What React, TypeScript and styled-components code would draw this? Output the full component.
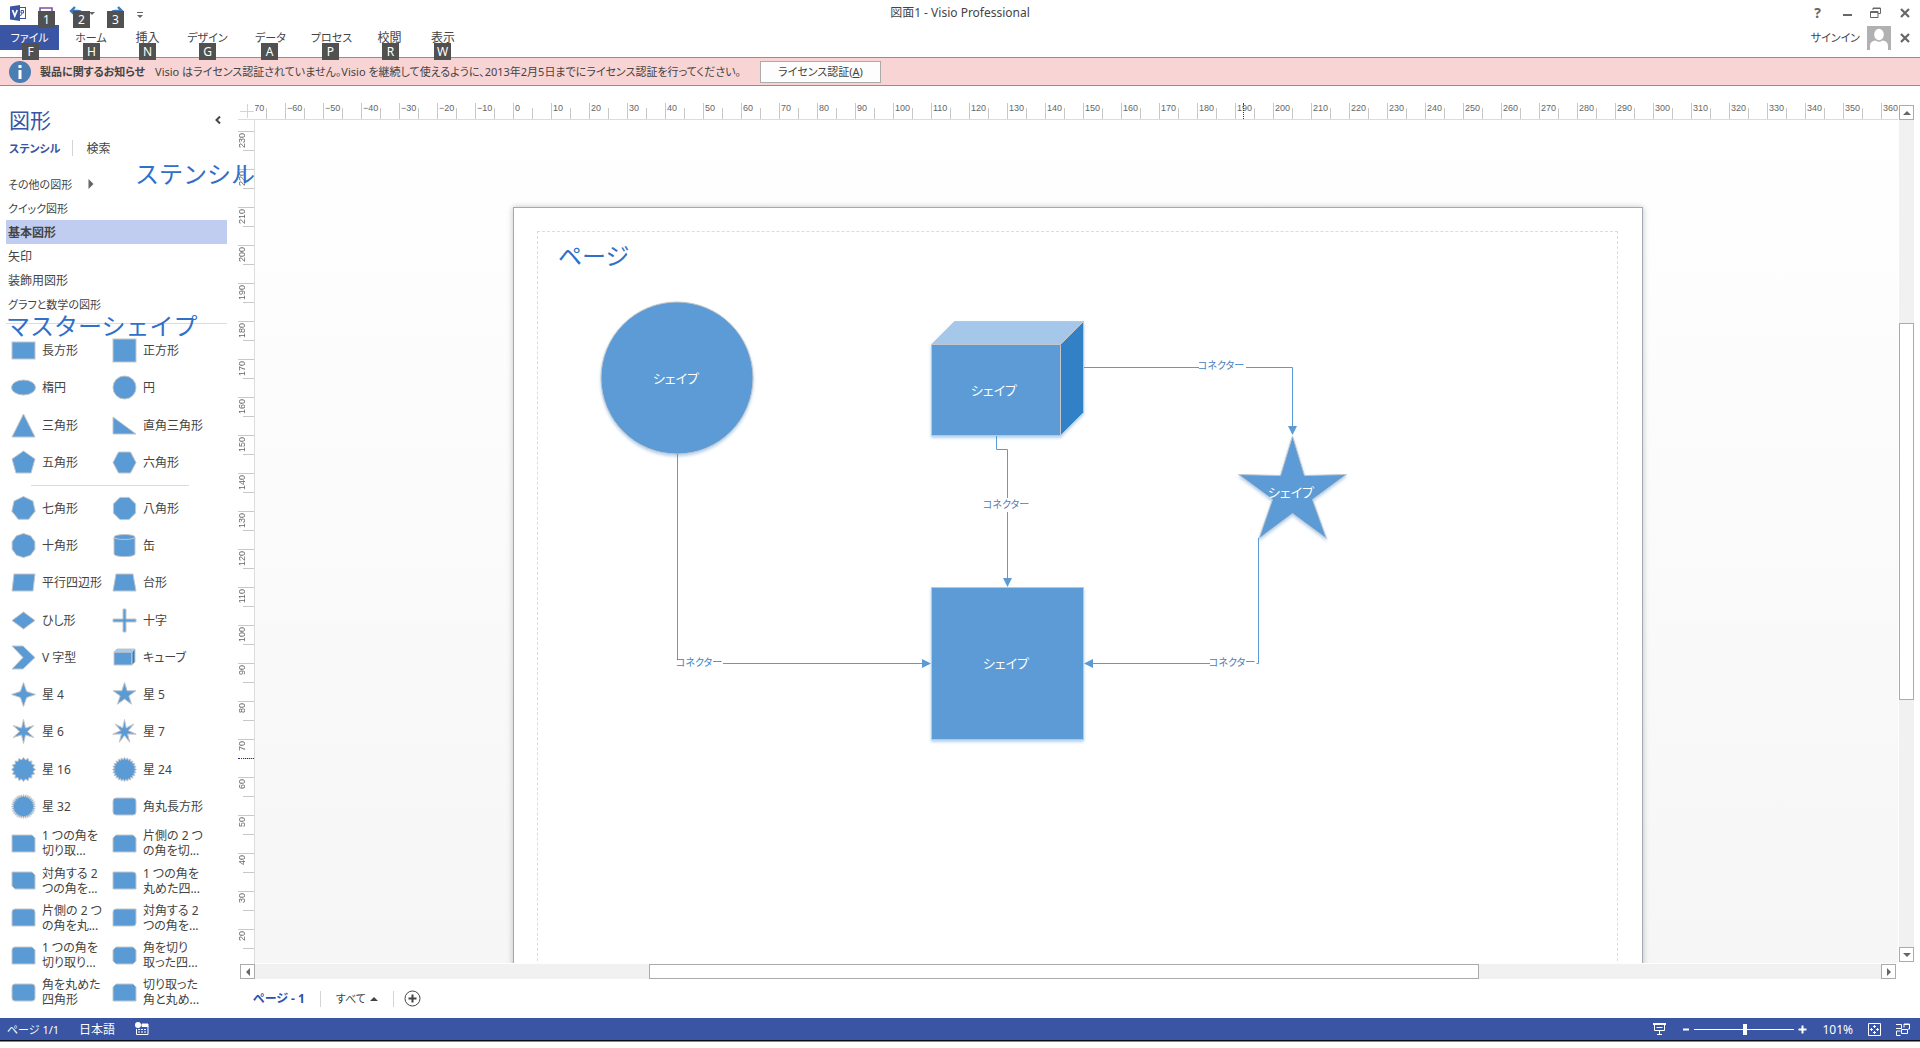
import React from "react";
import styled, { createGlobalStyle } from "styled-components";

const uiFont = `"Noto Sans", "Noto Sans CJK JP", sans-serif`;
const shapeBlue = "#5b9bd5";
const brand = "#3955a3";

const GlobalStyle = createGlobalStyle`
  * { box-sizing: border-box; }
  body {
    margin: 0;
    background: #fff;
    color: #444;
    font: 12px/15px ${uiFont};
    font-feature-settings: "palt";
    overflow: hidden;
  }
  button, input {
    font: inherit;
    font-feature-settings: inherit;
    color: inherit;
    margin: 0;
  }
  button {
    background: none;
    border: 0;
    padding: 0;
    white-space: nowrap;
  }
  svg { display: block; }
`;

const Window = styled.div`
  position: relative;
  display: flex;
  flex-direction: column;
  height: 100vh;
`;

/* ---------- title bar ---------- */

const TitleBar = styled.header`
  display: grid;
  grid-template-columns: 1fr auto 1fr;
  align-items: center;
  height: 25px;
`;

const QuickAccess = styled.div`
  display: flex;
  align-items: flex-start;
  height: 25px;
  padding: 3px 0 0 10px;
`;

const QuickButton = styled.button<{ $w: number }>`
  position: relative;
  width: ${(p) => p.$w}px;
  height: 20px;
`;

const KeyTip = styled.span<{ $x: number; $y: number }>`
  position: absolute;
  z-index: 2;
  left: ${(p) => p.$x}px;
  top: ${(p) => p.$y}px;
  width: 17px;
  height: 17px;
  background: #515151;
  color: #fff;
  font-size: 12px;
  line-height: 17px;
  text-align: center;
`;

const WindowTitle = styled.h1`
  margin: 0;
  font-size: 12px;
  font-weight: 400;
  line-height: 24px;
`;

const WindowButtons = styled.div`
  display: flex;
  justify-content: flex-end;
  padding-right: 1px;
`;

const IconButton = styled.button`
  display: flex;
  align-items: center;
  justify-content: center;
  width: 29px;
  height: 22px;
  color: #666;
`;

const HelpMark = styled(IconButton)`
  font-size: 14px;
  font-weight: 700;
`;

/* ---------- ribbon tabs ---------- */

const TabRow = styled.nav`
  display: flex;
  align-items: flex-start;
  height: 32px;
`;

const Tab = styled.button<{ $w: number; $file?: boolean; $kana?: boolean }>`
  position: relative;
  width: ${(p) => p.$w}px;
  height: 25px;
  margin-right: ${(p) => (p.$file ? 2 : 0)}px;
  background: ${(p) => (p.$file ? brand : "transparent")};
  color: ${(p) => (p.$file ? "#fff" : "#444")};
  font-size: ${(p) => (p.$kana ? 11 : 12)}px;
`;

const Account = styled.div`
  display: flex;
  align-items: center;
  gap: 7px;
  height: 25px;
  margin-left: auto;
  padding-right: 1px;
  font-size: 11px;
`;

const AccountClose = styled(IconButton)`
  margin-left: -8px;
`;

/* ---------- message bar ---------- */

const MessageBar = styled.section`
  display: flex;
  align-items: center;
  height: 29px;
  padding-left: 9px;
  background: #f8d4d4;
  border: solid #e56a6a;
  border-width: 1px 0;
  font-size: 11px;
`;

const MessageTitle = styled.strong`
  margin: 0 10px 0 9px;
`;

const MessageText = styled.span`
  white-space: nowrap;
`;

const LicenseButton = styled.button`
  width: 121px;
  height: 22px;
  margin-left: 19px;
  background: #fdfdfd;
  border: 1px solid #ababab;
`;

/* ---------- body ---------- */

const Body = styled.div`
  display: flex;
  flex: 1;
  min-height: 0;
`;

const Sidebar = styled.aside`
  display: flex;
  flex-direction: column;
  width: 238px;
  padding: 16px 11px 7px 6px;
`;

const SideHead = styled.div`
  display: flex;
  align-items: center;
  justify-content: space-between;
  height: 36px;
  padding: 0 6px 0 3px;
`;

const SideTitle = styled.h2`
  margin: 0;
  color: ${brand};
  font-size: 21px;
  font-weight: 400;
  line-height: 36px;
`;

const SideTabs = styled.div`
  display: flex;
  align-items: center;
  height: 20px;
  padding-left: 3px;
`;

const SideTab = styled.button<{ $active?: boolean }>`
  color: ${(p) => (p.$active ? brand : "#444")};
  font-size: ${(p) => (p.$active ? 11 : 12)}px;
  font-weight: ${(p) => (p.$active ? 700 : 400)};
`;

const Divider = styled.span<{ $left: number; $right: number }>`
  width: 1px;
  height: 16px;
  margin: 0 ${(p) => p.$right}px 0 ${(p) => p.$left}px;
  background: #d4d4d4;
`;

const StencilList = styled.ul`
  margin: 14px 0 7px;
  padding: 0;
  list-style: none;
`;

const StencilRow = styled.button<{ $active?: boolean; $kana?: boolean }>`
  display: flex;
  align-items: center;
  gap: 14px;
  width: 100%;
  height: 24px;
  padding-left: 2px;
  background: ${(p) => (p.$active ? "#c1cdf0" : "transparent")};
  font-size: ${(p) => (p.$kana ? 11 : 12)}px;
  font-weight: ${(p) => (p.$active ? 700 : 400)};
`;

const ListEnd = styled.hr`
  width: 100%;
  height: 1px;
  margin: 0 0 8px;
  border: 0;
  background: #dcdcdc;
`;

const MasterGroup = styled.div<{ $rows: number }>`
  display: grid;
  flex: ${(p) => p.$rows} 1 0;
  grid-template-columns: 101px 1fr;
  grid-auto-rows: 1fr;
  min-height: 0;
  padding-left: 5px;
`;

const GroupRule = styled.hr`
  width: 158px;
  height: 1px;
  margin: 4px 0 4px 25px;
  border: 0;
  background: #dcdcdc;
`;

const Master = styled.button`
  display: flex;
  align-items: center;
  gap: 6px;
  min-height: 0;
  text-align: left;
`;

/* ---------- drawing window ---------- */

const Main = styled.main`
  display: flex;
  flex: 1;
  flex-direction: column;
  min-width: 0;
`;

const DrawingArea = styled.div`
  display: grid;
  flex: 1;
  grid-template-columns: 17px 1fr 22px;
  grid-template-rows: 17px 1fr;
  min-height: 0;
  padding-top: 17px;
`;

const Corner = styled.div`
  display: flex;
  align-items: center;
  justify-content: center;
  border: solid #dcdcdc;
  border-width: 0 0 1px;
`;

const HRuler = styled.div`
  position: relative;
  display: flex;
  min-width: 0;
  overflow: hidden;
  border-bottom: 1px solid #dcdcdc;
`;

const HCell = styled.div`
  display: flex;
  flex: 0 0 38px;
  align-items: flex-end;
  &:first-child { margin-left: -8px; }
`;

const HMajor = styled.span`
  width: 19px;
  height: 16px;
  padding: 1px 0 0 1px;
  border-left: 1px solid #c8c8c8;
  color: #666;
  font: 9px/9px "Liberation Sans", sans-serif;
  white-space: nowrap;
`;

const HMinor = styled.span`
  width: 19px;
  height: 11px;
  border-left: 1px solid #c8c8c8;
`;

const VRuler = styled.div`
  position: relative;
  min-height: 0;
  overflow: hidden;
  border-right: 1px solid #dcdcdc;
`;

const VCell = styled.div`
  display: flex;
  flex-direction: column;
  align-items: flex-end;
  height: 38px;
  &:first-child { margin-top: -27px; }
`;

const VMajor = styled.span`
  width: 16px;
  height: 19px;
  padding-top: 1px;
  border-top: 1px solid #c8c8c8;
`;

const VLabel = styled.span`
  display: block;
  width: 9px;
  color: #666;
  font: 9px/9px "Liberation Sans", sans-serif;
  writing-mode: vertical-rl;
  transform: rotate(180deg);
`;

const VMinor = styled.span`
  width: 11px;
  height: 19px;
  border-top: 1px solid #c8c8c8;
`;

const CursorMark = styled.span<{ $vertical?: boolean }>`
  position: absolute;
  ${(p) =>
    p.$vertical
      ? "left: 0; top: 638px; width: 16px; border-top: 1px dotted #26308c;"
      : "left: 988px; top: 0; height: 16px; border-left: 1px dotted #26308c;"}
`;

const Canvas = styled.div`
  position: relative;
  min-width: 0;
  overflow: hidden;
  background: linear-gradient(#fff, #f6f6f6);
  border-bottom: 1px solid #fff;
`;

const Page = styled.div`
  position: absolute;
  left: 258px;
  top: 87px;
  width: 1130px;
  height: 800px;
  background: #fff;
  border: 1px solid #a4a9b6;
  box-shadow: 0 0 6px rgba(0, 0, 0, 0.24);
`;

const Margins = styled.div`
  position: absolute;
  inset: 23px 24px -10px 23px;
  border: 1px dashed #dcdcdc;
`;

const Drawing = styled.svg`
  position: absolute;
  left: 0;
  top: 0;
`;

const CanvasLabel = styled.span<{ $x: number; $y: number; $on?: boolean }>`
  position: absolute;
  left: ${(p) => p.$x - 40}px;
  top: ${(p) => p.$y - 8}px;
  width: 80px;
  color: ${(p) => (p.$on ? "#fff" : "#3f7fbf")};
  font-size: ${(p) => (p.$on ? 13 : 10)}px;
  line-height: 16px;
  text-align: center;
`;

const Annotation = styled.span<{ $x: number; $y: number }>`
  position: absolute;
  z-index: 3;
  left: ${(p) => p.$x}px;
  top: ${(p) => p.$y}px;
  color: #2f70c8;
  font-size: 24px;
  font-weight: 400;
  font-feature-settings: normal;
  line-height: 30px;
  white-space: nowrap;
`;

const VScroll = styled.div`
  display: flex;
  grid-column: 3;
  grid-row: 1 / 3;
  flex-direction: column;
  width: 15px;
  margin: 2px 0 2px 1px;
  background: #f1f1f1;
`;

const HScroll = styled.div`
  display: flex;
  height: 15px;
  margin: 0 24px 0 2px;
  background: #f1f1f1;
`;

const ScrollButton = styled.button`
  display: flex;
  flex: 0 0 15px;
  align-items: center;
  justify-content: center;
  height: 15px;
  background: #fff;
  border: 1px solid #ababab;
`;

const ScrollGap = styled.span<{ $n: number }>`
  flex: ${(p) => p.$n} 1 0;
`;

const ScrollThumb = styled.span<{ $n: number }>`
  flex: ${(p) => p.$n} 1 0;
  background: #fff;
  border: 1px solid #ababab;
`;

const PageTabs = styled.div`
  display: flex;
  align-items: center;
  height: 39px;
  padding-left: 15px;
`;

const PageTab = styled.button<{ $active?: boolean }>`
  display: flex;
  align-items: center;
  gap: 4px;
  color: ${(p) => (p.$active ? "#2b4fb0" : "#444")};
  font-size: ${(p) => (p.$active ? 12 : 11)}px;
  font-weight: ${(p) => (p.$active ? 700 : 400)};
`;

/* ---------- status bar ---------- */

const StatusBar = styled.footer`
  display: flex;
  align-items: center;
  gap: 20px;
  height: 22px;
  padding: 0 10px 0 7px;
  background: ${brand};
  color: #fff;
`;

const PageCount = styled.span`
  font-size: 11px;
`;

const ZoomGroup = styled.div`
  display: flex;
  align-items: center;
  margin-left: auto;
  gap: 15px;
`;

const ZoomControl = styled.div`
  display: flex;
  align-items: center;
  gap: 4px;
`;

const ZoomSlider = styled.input`
  width: 100px;
  height: 12px;
  appearance: none;
  background: linear-gradient(#fff, #fff) center / 100% 1px no-repeat;
  &::-webkit-slider-thumb {
    appearance: none;
    width: 4px;
    height: 11px;
    background: #fff;
  }
`;

const TaskbarEdge = styled.div`
  height: 8px;
  background: #fff;
  border-top: 1px solid #0b0b14;
  box-shadow: inset 0 1px 0 #8d7f98;
`;

/* ---------- icons ---------- */

const points = (n: number, outer: number, inner?: number, turn = -90) => {
  const count = inner ? n * 2 : n;
  return Array.from({ length: count }, (_, i) => {
    const r = inner && i % 2 ? inner : outer;
    const a = ((turn + (360 / count) * i) * Math.PI) / 180;
    return `${(12.5 + r * Math.cos(a)).toFixed(2)},${(12.5 + r * Math.sin(a)).toFixed(2)}`;
  }).join(" ");
};

const Poly = ({ p }: { p: string }) => <polygon points={p} />;

const glyphs: Record<string, React.ReactNode> = {
  rect: <rect x="1" y="4" width="23" height="17" />,
  square: <rect x="1" y="1" width="23" height="23" />,
  ellipse: <ellipse cx="12.5" cy="12.5" rx="12" ry="7.5" />,
  circle: <circle cx="12.5" cy="12.5" r="11.5" />,
  tri: <Poly p="12.5,1 24,24 1,24" />,
  rtri: <Poly p="1,4 24,21 1,21" />,
  penta: <Poly p="12.5,1 24,9 20,23 5,23 1,9" />,
  hexa: <Poly p="6.5,2 18.5,2 24,12.5 18.5,23 6.5,23 1,12.5" />,
  hepta: <Poly p={points(7, 12)} />,
  octa: <Poly p={points(8, 12, undefined, 22.5)} />,
  deca: <Poly p={points(10, 12)} />,
  can: (
    <>
      <path d="M2 4v17c0 3.500 21 3.500 21 0V4z" />
      <ellipse cx="12.500" cy="4" rx="10.500" ry="2.500" />
    </>
  ),
  para: <Poly p="3,4 24,4 22,21 1,21" />,
  trap: <Poly p="4,4 21,4 24,21 1,21" />,
  diamond: <Poly p="12.500,4 24,12.500 12.500,21 1,12.500" />,
  cross: <Poly p="11,1 14,1 14,11 24,11 24,14 14,14 14,24 11,24 11,14 1,14 1,11 11,11" />,
  chevron: <Poly p="1,1 12,1 24,12.500 12,24 1,24 12,12.500" />,
  cube: (
    <>
      <Poly p="2,7 20,7 20,20 2,20" />
      <polygon points="2,7 5,4 23,4 20,7" fill="#a5c8ea" />
      <polygon points="20,7 23,4 23,17 20,20" fill="#3180c5" />
    </>
  ),
  s4: <Poly p={points(4, 12, 4.4)} />,
  s5: <Poly p={points(5, 12, 4.6)} />,
  s6: <Poly p={points(6, 12, 4)} />,
  s7: <Poly p={points(7, 12, 4)} />,
  s16: <Poly p={points(16, 12, 9.8)} />,
  s24: <Poly p={points(24, 12, 10)} />,
  s32: <Poly p={points(32, 12, 9.6)} />,
  round: <rect x="1" y="4" width="23" height="17" rx="3" />,
  snip1: <Poly p="1,4 21,4 24,7 24,21 1,21" />,
  snip2: <Poly p="4,4 21,4 24,7 24,21 1,21 1,7" />,
  snipD: <Poly p="1,4 21,4 24,7 24,21 4,21 1,18" />,
  round1: <path d="M1 4h20q3 0 3 3v14H1z" />,
  round2: <path d="M4 4h17q3 0 3 3v14H1V7q0-3 3-3z" />,
  roundD: <path d="M4 4h20v14q0 3-3 3H1V7q0-3 3-3z" />,
  snipRound: <path d="M4 4h17l3 3v14H1V7q0-3 3-3z" />,
  snipAll: <Poly p="4,4 21,4 24,7 24,18 21,21 4,21 1,18 1,7" />,
};

const MasterIcon = ({ kind }: { kind: string }) => (
  <svg width="25" height="25" viewBox="0 0 25 25" fill={shapeBlue} stroke="#c3c6ca" strokeWidth="1">
    {glyphs[kind]}
  </svg>
);

const Triangle = ({ dir, size = 8, color = "#666" }: { dir: "up" | "down" | "left" | "right"; size?: number; color?: string }) => {
  const shape = {
    up: "0,6 4,2 8,6",
    down: "0,2 8,2 4,6",
    left: "6,0 6,8 2,4",
    right: "2,0 6,4 2,8",
  }[dir];
  return (
    <svg width={size} height={size} viewBox="0 0 8 8" fill={color}>
      <polygon points={shape} />
    </svg>
  );
};

const CloseIcon = () => (
  <svg width="10" height="10" viewBox="0 0 10 10" stroke="#666" strokeWidth="2.2">
    <path d="M1 1l8 8M9 1l-8 8" />
  </svg>
);

const AppLogo = () => (
  <svg width="16" height="16" viewBox="0 0 16 16">
    <rect x="8.500" y="2.500" width="7" height="11" fill="#fff" stroke={brand} />
    <path d="M11 5.500h2.500v2.500H11zM12 8l-1.500 3" fill="none" stroke={brand} />
    <path d="M0 1.500L10 0v16L0 14.500z" fill={brand} />
    <path d="M2.500 5l2.300 6L7.200 5" fill="none" stroke="#fff" strokeWidth="1.700" />
  </svg>
);

const SaveIcon = () => (
  <svg width="14" height="14" viewBox="0 0 14 14" fill="none" stroke="#7d50ad" strokeWidth="1.600">
    <path d="M1 2h12v12H1z" />
  </svg>
);

const UndoIcon = () => (
  <svg width="16" height="14" viewBox="0 0 16 14" fill="none" stroke="#4079b8" strokeWidth="2.400">
    <path d="M6 1L2 5l4 4M2 5h7q5 0 5 7" />
  </svg>
);

const RedoIcon = () => (
  <svg width="16" height="14" viewBox="0 0 16 14" fill="none" stroke="#4079b8" strokeWidth="2.400">
    <path d="M10 1l4 4-4 4M14 5H7q-5 0-5 7" />
  </svg>
);

/* ---------- data ---------- */

const isKana = (s: string) => /^[ァ-ーその]/.test(s);

const tabs: [string, string, number, number][] = [
  ["ファイル", "F", 59, 22],
  ["ホーム", "H", 60, 22],
  ["挿入", "N", 53, 18],
  ["デザイン", "G", 67, 25],
  ["データ", "A", 59, 20],
  ["プロセス", "P", 63, 22],
  ["校閲", "R", 53, 19],
  ["表示", "W", 54, 18],
];

const stencils = ["その他の図形", "クイック図形", "基本図形", "矢印", "装飾用図形", "グラフと数学の図形"];

const basicMasters: [string, string][] = [
  ["rect", "長方形"], ["square", "正方形"],
  ["ellipse", "楕円"], ["circle", "円"],
  ["tri", "三角形"], ["rtri", "直角三角形"],
  ["penta", "五角形"], ["hexa", "六角形"],
];

const moreMasters: [string, string][] = [
  ["hepta", "七角形"], ["octa", "八角形"],
  ["deca", "十角形"], ["can", "缶"],
  ["para", "平行四辺形"], ["trap", "台形"],
  ["diamond", "ひし形"], ["cross", "十字"],
  ["chevron", "V 字型"], ["cube", "キューブ"],
  ["s4", "星 4"], ["s5", "星 5"],
  ["s6", "星 6"], ["s7", "星 7"],
  ["s16", "星 16"], ["s24", "星 24"],
  ["s32", "星 32"], ["round", "角丸長方形"],
  ["snip1", "1 つの角を|切り取..."], ["snip2", "片側の 2 つ|の角を切..."],
  ["snipD", "対角する 2|つの角を..."], ["round1", "1 つの角を|丸めた四..."],
  ["round2", "片側の 2 つ|の角を丸..."], ["roundD", "対角する 2|つの角を..."],
  ["snipRound", "1 つの角を|切り取り..."], ["snipAll", "角を切り|取った四..."],
  ["round", "角を丸めた|四角形"], ["snip2", "切り取った|角と丸め..."],
];

const hMarks = Array.from({ length: 44 }, (_, i) => -70 + i * 10);
const vMarks = Array.from({ length: 24 }, (_, i) => 240 - i * 10);

const MasterItem = ({ kind, label }: { kind: string; label: string }) => (
  <Master>
    <MasterIcon kind={kind} />
    <span>
      {label.split("|").map((line, i) => (
        <React.Fragment key={i}>
          {i > 0 && <br />}
          {line}
        </React.Fragment>
      ))}
    </span>
  </Master>
);

/* The viewBox keeps the window's coordinates; its origin is the page corner. */
const Diagram = () => (
  <Drawing width="1128" height="780" viewBox="514 208 1128 780">
    <defs>
      <filter id="soft" x="-10%" y="-10%" width="120%" height="125%">
        <feDropShadow dx="0" dy="2" stdDeviation="1.500" floodColor="#5b9bd5" floodOpacity="0.45" />
      </filter>
    </defs>
    <g fill={shapeBlue} stroke="#c4c6c9" filter="url(#soft)">
      <circle cx="677" cy="378" r="76" />
      <rect x="931.500" y="587.500" width="152" height="152" />
      <rect x="931.500" y="344.500" width="129" height="91" />
      <polygon points="931.500,344.500 954.500,321.500 1083.500,321.500 1060.500,344.500" fill="#a5c8ea" />
      <polygon points="1060.500,344.500 1083.500,321.500 1083.500,412.500 1060.500,435.500" fill="#3180c5" />
      <polygon points="1292.500,436 1304.500,475.500 1346.500,474.500 1312.500,499.500 1326.500,538.500 1292.500,513.500 1259,538.500 1272.500,499.500 1238.500,474.500 1280.500,475.500" strokeMiterlimit="8" />
    </g>
    <g fill="none" stroke={shapeBlue}>
      <path d="M677.500 454v206M723 663.500h200" />
      <path d="M1084 367.500h115M1246 367.500h46.500V427" />
      <path d="M996.500 436v13.500h11V498M1007.500 512v67" />
      <path d="M1258.500 538v125.500h-2M1210 663.500H1092" />
    </g>
    <g fill={shapeBlue}>
      <polygon points="922,659 922,668 931,663.500" />
      <polygon points="1093,659 1093,668 1084,663.500" />
      <polygon points="1003,578 1012,578 1007.500,587" />
      <polygon points="1288,426 1297,426 1292.500,435" />
    </g>
  </Drawing>
);

export default function App() {
  return (
    <Window>
      <GlobalStyle />
      <TitleBar>
        <QuickAccess>
          <QuickButton $w={29} aria-label="Visio"><AppLogo /></QuickButton>
          <QuickButton $w={30} aria-label="上書き保存"><SaveIcon /><KeyTip $x={-1} $y={8}>1</KeyTip></QuickButton>
          <QuickButton $w={19} aria-label="元に戻す"><UndoIcon /><KeyTip $x={4} $y={8}>2</KeyTip></QuickButton>
          <QuickButton $w={20} aria-label="元に戻す一覧">
            <svg width="8" height="14" viewBox="0 0 8 14" fill="#666"><path d="M1 6h6L4 9z" /></svg>
          </QuickButton>
          <QuickButton $w={29} aria-label="やり直し"><RedoIcon /><KeyTip $x={-1} $y={8}>3</KeyTip></QuickButton>
          <QuickButton $w={10} aria-label="クイック アクセスのカスタマイズ">
            <svg width="6" height="14" viewBox="0 0 6 14" fill="#666"><path d="M0 6h6v1H0zM0 9h6L3 12z" /></svg>
          </QuickButton>
        </QuickAccess>
        <WindowTitle>図面1 - Visio Professional</WindowTitle>
        <WindowButtons>
          <HelpMark aria-label="ヘルプ">?</HelpMark>
          <IconButton aria-label="最小化">
            <svg width="10" height="10" viewBox="0 0 10 10" fill="#666"><rect x="1" y="6" width="9" height="2" /></svg>
          </IconButton>
          <IconButton aria-label="元に戻す (縮小)">
            <svg width="11" height="11" viewBox="0 0 11 11" fill="none" stroke="#666">
              <path d="M3 3V1h7.500v5.500H8M3 1.500h7.500" />
              <path d="M.500 4.500H8v6H.500zM.500 5.500H8" />
            </svg>
          </IconButton>
          <IconButton aria-label="閉じる"><CloseIcon /></IconButton>
        </WindowButtons>
      </TitleBar>

      <TabRow>
        {tabs.map(([label, key, width, tip], i) => (
          <Tab key={key} $w={width} $file={i === 0} $kana={isKana(label)}>
            {label}
            <KeyTip $x={tip} $y={18}>{key}</KeyTip>
          </Tab>
        ))}
        <Account>
          <button>サインイン</button>
          <svg width="24" height="24" viewBox="0 0 24 24">
            <rect width="24" height="24" fill="#b1b1b1" />
            <ellipse cx="12" cy="8.500" rx="4.800" ry="5.700" fill="#fff" />
            <path d="M3 24v-4q0-5 5.500-5.500Q12 17 15.500 14.500 21 15 21 20v4z" fill="#fff" />
          </svg>
          <AccountClose aria-label="図面を閉じる"><CloseIcon /></AccountClose>
        </Account>
      </TabRow>

      <MessageBar>
        <svg width="22" height="22" viewBox="0 0 22 22">
          <circle cx="11" cy="11" r="11" fill="#4a7eb2" />
          <path d="M9.500 4h3v3h-3zM9.500 9h3v9h-3z" fill="#fff" />
        </svg>
        <MessageTitle>製品に関するお知らせ</MessageTitle>
        <MessageText>
          Visio はライセンス認証されていません。Visio を継続して使えるように、2013年2月5日までにライセンス認証を行ってください。
        </MessageText>
        <LicenseButton>ライセンス認証(<u>A</u>)</LicenseButton>
      </MessageBar>

      <Body>
        <Sidebar>
          <SideHead>
            <SideTitle>図形</SideTitle>
            <button aria-label="シェイプ ウィンドウの最小化">
              <svg width="6" height="8" viewBox="0 0 6 8" fill="none" stroke="#444" strokeWidth="2">
                <path d="M5 .500L1.500 4 5 7.500" />
              </svg>
            </button>
          </SideHead>
          <SideTabs>
            <SideTab $active>ステンシル</SideTab>
            <Divider $left={11} $right={14} />
            <SideTab>検索</SideTab>
          </SideTabs>
          <StencilList>
            {stencils.map((name, i) => (
              <li key={name}>
                <StencilRow $active={i === 2} $kana={isKana(name)}>
                  {name}
                  {i === 0 && <Triangle dir="right" size={10} />}
                </StencilRow>
              </li>
            ))}
          </StencilList>
          <ListEnd />
          <MasterGroup $rows={4}>
            {basicMasters.map(([kind, label], i) => <MasterItem key={i} kind={kind} label={label} />)}
          </MasterGroup>
          <GroupRule />
          <MasterGroup $rows={14}>
            {moreMasters.map(([kind, label], i) => <MasterItem key={i} kind={kind} label={label} />)}
          </MasterGroup>
        </Sidebar>

        <Main>
          <DrawingArea>
            <Corner>
              <svg width="14" height="14" viewBox="0 0 14 14" stroke="#cdd2f6"><path d="M7.500 0v14M0 7.500h14" /></svg>
            </Corner>
            <HRuler>
              {hMarks.map((n) => (
                <HCell key={n}>
                  <HMajor>{n < 0 ? `−${-n}` : n}</HMajor>
                  <HMinor />
                </HCell>
              ))}
              <CursorMark />
            </HRuler>
            <VScroll>
              <ScrollButton aria-label="上へスクロール"><Triangle dir="up" /></ScrollButton>
              <ScrollGap $n={203} />
              <ScrollThumb $n={376} />
              <ScrollGap $n={247} />
              <ScrollButton aria-label="下へスクロール"><Triangle dir="down" /></ScrollButton>
            </VScroll>
            <VRuler>
              {vMarks.map((n) => (
                <VCell key={n}>
                  <VMajor><VLabel>{n}</VLabel></VMajor>
                  <VMinor />
                </VCell>
              ))}
              <CursorMark $vertical />
            </VRuler>
            <Canvas>
              <Page>
                <Margins />
                <Diagram />
                <Annotation $x={44} $y={33}>ページ</Annotation>
                <CanvasLabel $on $x={162} $y={170}>シェイプ</CanvasLabel>
                <CanvasLabel $on $x={480} $y={182}>シェイプ</CanvasLabel>
                <CanvasLabel $on $x={777} $y={284}>シェイプ</CanvasLabel>
                <CanvasLabel $on $x={492} $y={455}>シェイプ</CanvasLabel>
                <CanvasLabel $x={185} $y={454}>コネクター</CanvasLabel>
                <CanvasLabel $x={707} $y={157}>コネクター</CanvasLabel>
                <CanvasLabel $x={492} $y={296}>コネクター</CanvasLabel>
                <CanvasLabel $x={718} $y={454}>コネクター</CanvasLabel>
              </Page>
            </Canvas>
          </DrawingArea>
          <HScroll>
            <ScrollButton aria-label="左へスクロール"><Triangle dir="left" /></ScrollButton>
            <ScrollGap $n={394} />
            <ScrollThumb $n={829} />
            <ScrollGap $n={403} />
            <ScrollButton aria-label="右へスクロール"><Triangle dir="right" /></ScrollButton>
          </HScroll>
          <PageTabs>
            <PageTab $active>ページ - 1</PageTab>
            <Divider $left={15} $right={15} />
            <PageTab>すべて<Triangle dir="up" color="#444" /></PageTab>
            <Divider $left={15} $right={10} />
            <button aria-label="ページの追加">
              <svg width="17" height="17" viewBox="0 0 17 17" fill="none" stroke="#444">
                <circle cx="8.500" cy="8.500" r="7.500" />
                <path d="M8.500 4.500v8M4.500 8.500h8" strokeWidth="2" />
              </svg>
            </button>
          </PageTabs>
        </Main>
      </Body>

      <StatusBar>
        <PageCount>ページ 1/1</PageCount>
        <span>日本語</span>
        <button aria-label="マクロの記録">
          <svg width="14" height="14" viewBox="0 0 14 14" fill="none" stroke="#fff">
            <circle cx="3" cy="3" r="3" fill="#fff" stroke="none" />
            <path d="M7 2h6v2.500H7z" fill="#fff" />
            <path d="M1.500 7v5.500h11.500V4M3 7.500h2M6 7.500h2M9 7.500h2M3 10h2M6 10h2M9 10h2" />
          </svg>
        </button>
        <ZoomGroup>
          <button aria-label="プレゼンテーション モード">
            <svg width="13" height="12" viewBox="0 0 13 12" fill="none" stroke="#fff">
              <path d="M0 1h13" strokeWidth="2" />
              <path d="M1.500 2v5.500h10V2M3.500 4.500h6M6.500 7.500v4M4 11.500h5" />
            </svg>
          </button>
          <ZoomControl>
            <button aria-label="縮小">
              <svg width="9" height="9" viewBox="0 0 9 9" fill="#fff"><path d="M2 3.500h6v2H2z" /></svg>
            </button>
            <ZoomSlider type="range" min={0} max={100} defaultValue={51} aria-label="ズーム" />
            <button aria-label="拡大">
              <svg width="9" height="9" viewBox="0 0 9 9" fill="#fff"><path d="M.500 3.500h3v-3h2v3h3v2h-3v3h-2v-3h-3z" /></svg>
            </button>
          </ZoomControl>
          <button>101%</button>
          <button aria-label="ページ全体を表示">
            <svg width="13" height="13" viewBox="0 0 13 13" fill="none" stroke="#fff">
              <path d="M.500 .500h12v12H.500z" />
              <path d="M6.500 2v3M5 3.500h3M6.500 8v3M5 9.500h3M2 6.500h3M3.500 5v3M8 6.500h3M9.500 5v3" />
            </svg>
          </button>
          <button aria-label="ウィンドウの切り替え">
            <svg width="14" height="13" viewBox="0 0 14 13" fill="none" stroke="#fff">
              <path d="M0 1.500h5.500v4H0M.500 8v4.500h4M.500 8h4M8 4.500V1h5.500v5h-1.500M8 1.500h5.500" />
              <path d="M5.500 6.500h6v4h-6z" />
            </svg>
          </button>
        </ZoomGroup>
      </StatusBar>
      <TaskbarEdge />

      <Annotation $x={135} $y={159}>ステンシル</Annotation>
      <Annotation $x={6} $y={311}>マスターシェイプ</Annotation>
    </Window>
  );
}
